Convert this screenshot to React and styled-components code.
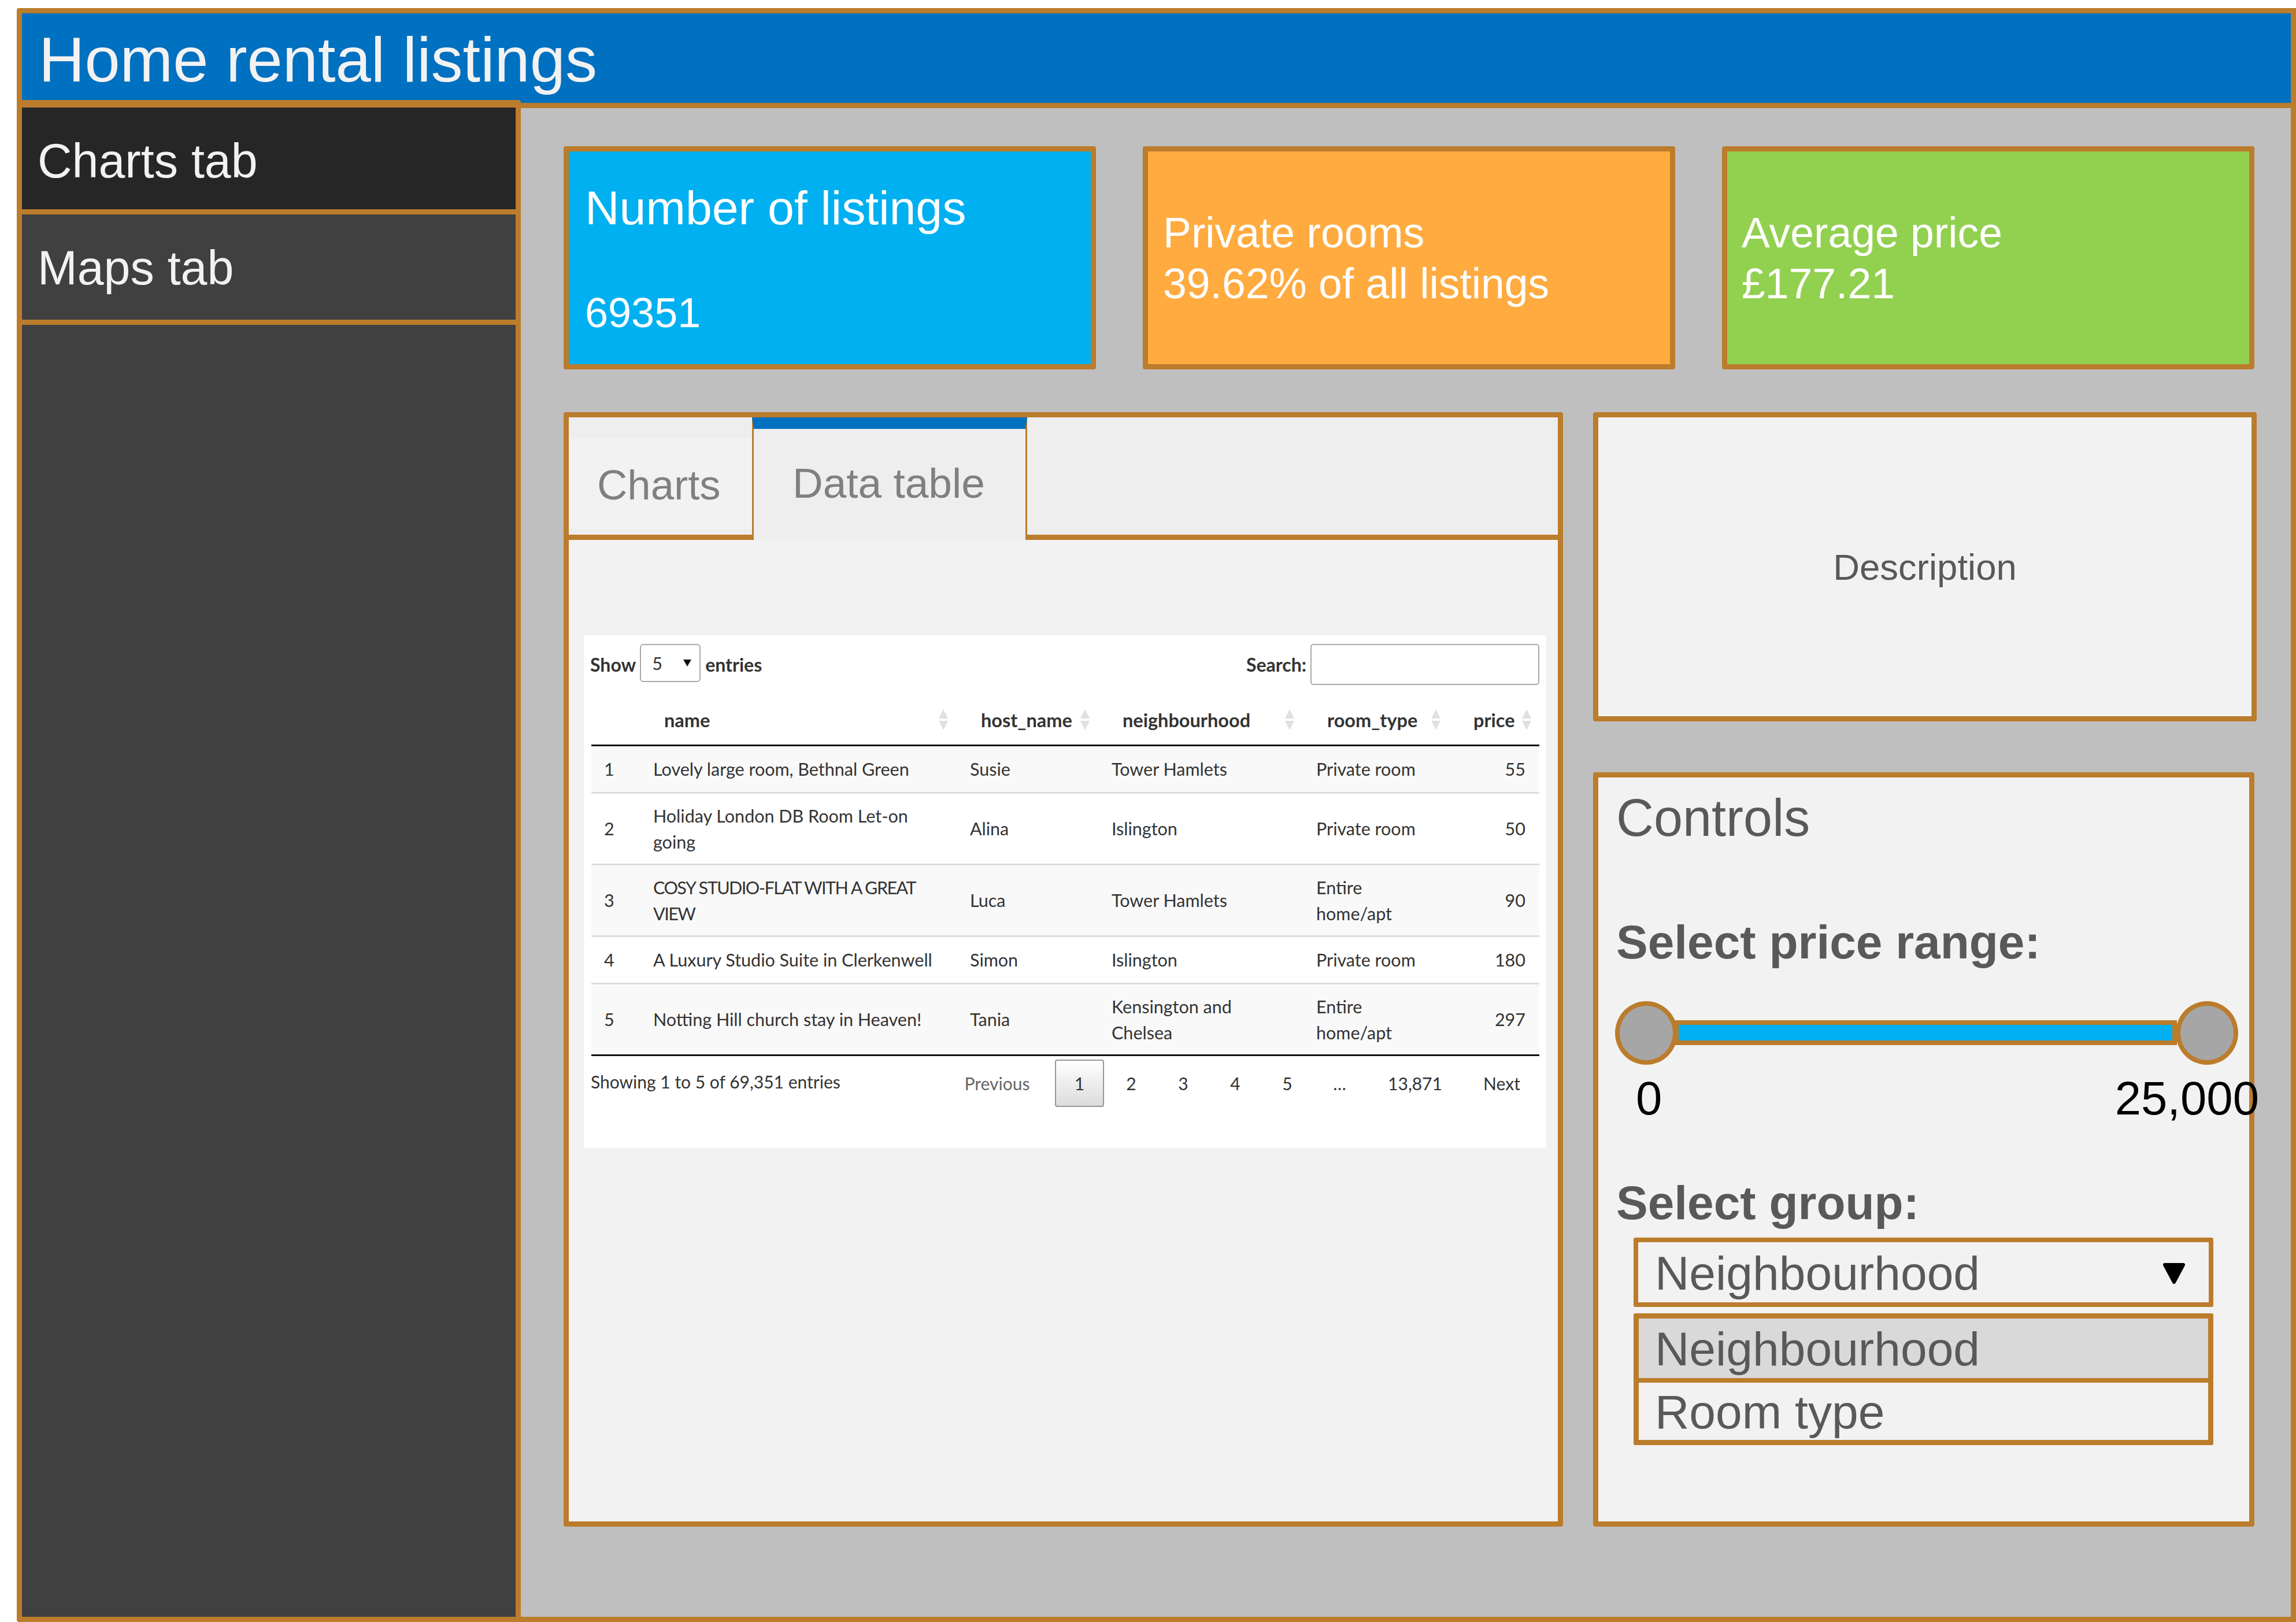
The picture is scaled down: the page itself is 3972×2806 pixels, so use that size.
import styled, { createGlobalStyle } from 'styled-components'

const GlobalStyle = createGlobalStyle`
  html, body { margin: 0; padding: 0; background: #fff; }
  * { box-sizing: border-box; }
`

const edge = '#bb7c2c'

const Page = styled.div`
  width: 3972px;
  height: 2806px;
  padding: 14px 0 0 29px;
  display: flex;
  flex-direction: column;
  font-family: "Liberation Sans", Arial, sans-serif;
`
const Header = styled.header`
  height: 173px;
  flex: none;
  background: #0070c0;
  border: 9px solid ${edge};
  border-radius: 4px 0 0 0;
  padding: 4px 0 0 29px;
  display: flex;
  align-items: center;
`
const Title = styled.h1`
  margin: 0;
  font-size: 110px;
  font-weight: 400;
  color: #f2f2f2;
`
const Body = styled.div`
  flex: 1;
  display: flex;
  min-height: 0;
`
const Sidebar = styled.nav`
  width: 872px;
  flex: none;
  margin-top: -14px;
  z-index: 1;
  background: #404040;
  border-top: 13px solid ${edge};
  border-left: 9px solid ${edge};
  border-right: 9px solid ${edge};
  border-bottom: 9px solid ${edge};
  border-radius: 4px 4px 0 4px;
`
const SideItem = styled.div`
  height: ${p => p.$h}px;
  box-sizing: content-box;
  background: ${p => p.$active ? '#262626' : '#404040'};
  border-bottom: 9px solid ${edge};
  padding-left: 27px;
  padding-top: ${p => p.$active ? 8 : 3}px;
  display: flex;
  align-items: center;
  font-size: 82.5px;
  color: #f2f2f2;
`
const Main = styled.main`
  flex: 1;
  background: #bfbfbf;
  border-right: 9px solid ${edge};
  border-bottom: 9px solid ${edge};
  padding: 66px 63px 0 74px;
  display: flex;
  flex-direction: column;
  gap: 74px;
`
const Cards = styled.div`
  display: grid;
  grid-template-columns: repeat(3, 1fr);
  column-gap: 81px;
`
const Card = styled.div`
  height: 386px;
  background: ${p => p.$bg};
  border: 9px solid ${edge};
  border-radius: 4px;
  color: #fff;
  padding: 2px 0 0 ${p => p.$pad}px;
  display: flex;
  flex-direction: column;
  justify-content: center;
  font-size: 73.3px;
  line-height: 88px;
`
const BigCardTitle = styled.div`
  font-size: 82.4px;
  line-height: 90px;
  margin-bottom: 97px;
`
const BigCardValue = styled.div`
  font-size: 72px;
  line-height: 80px;
`
const Lower = styled.div`
  display: grid;
  grid-template-columns: 1729px 1144px;
  column-gap: 52px;
  height: 1928px;
`
const TabBox = styled.section`
  background: #f2f2f2;
  border: 9px solid ${edge};
  border-radius: 4px;
  display: flex;
  flex-direction: column;
`
const TabBar = styled.div`
  height: 212px;
  flex: none;
  background: #eeeeee;
  border-bottom: 9px solid ${edge};
  display: flex;
`
const Tab = styled.div`
  width: 317px;
  height: 158px;
  margin-top: 35px;
  background: #f2f2f2;
  padding: 4px 0 0 49px;
  display: flex;
  align-items: center;
  font-size: 72.5px;
  color: #808080;
`
const ActiveTab = styled.div`
  width: 476px;
  height: 212px;
  flex: none;
  background: #eeeeee;
  border-left: 3px solid ${edge};
  border-right: 3px solid ${edge};
  border-top: 20px solid #0070c0;
  padding: 0 0 0 67px;
  font-size: 73px;
  line-height: 187px;
  color: #808080;
`
const TabBody = styled.div`
  flex: 1;
  padding: 165px 20px 0 26px;
`
const TableCard = styled.div`
  height: 887px;
  background: #fff;
  padding: 15px 12px 0 13px;
  font-family: Lato, "Liberation Sans", sans-serif;
  font-size: 30.5px;
  color: #333;
`
const Toolbar = styled.div`
  height: 71px;
  margin-left: -2px;
  display: flex;
  align-items: center;
  font-size: 32px;
  font-weight: 700;
`
const PageSelect = styled.div`
  width: 105px;
  height: 66px;
  margin: 0 8px 5px 7px;
  border: 2px solid #aaa;
  border-radius: 6px;
  padding: 0 14px 0 19px;
  display: flex;
  align-items: center;
  justify-content: space-between;
  font-size: 30.5px;
  font-weight: 400;
`
const SearchLabel = styled.span`
  margin-left: auto;
  margin-right: 7px;
`
const SearchBox = styled.div`
  width: 396px;
  height: 71px;
  border: 2px solid #aaa;
  border-radius: 5px;
  background: #fff;
`
const Table = styled.table`
  width: 1640px;
  margin-top: 18px;
  border-collapse: collapse;
  table-layout: fixed;
`
const Th = styled.th`
  height: 86px;
  padding: 0 13px 0 ${p => p.$pad ?? 43}px;
  border-bottom: 3px solid #111;
  text-align: left;
  font-size: 32.5px;
  font-weight: 700;
`
const ThInner = styled.div`
  display: flex;
  align-items: center;
  justify-content: space-between;
  white-space: nowrap;
`
const Tr = styled.tr`
  background: ${p => p.$odd ? '#f9f9f9' : '#fff'};
  &:not(:last-child) td { border-bottom: 3px solid #ddd; }
  &:last-child td { border-bottom: 3px solid #111; }
`
const Td = styled.td`
  height: 82px;
  padding: 16px 24px 15px;
  line-height: 45px;
  vertical-align: middle;
  text-align: ${p => p.$right ? 'right' : 'left'};
  &:first-child { padding-left: 22px; }
`
const Caps = styled.span`
  letter-spacing: -1.5px;
`
const Footer = styled.div`
  display: flex;
  align-items: flex-start;
  margin-top: 6px;
  font-size: 30px;
`
const Info = styled.div`
  line-height: 76px;
  margin-left: -1px;
`
const Pager = styled.div`
  margin-left: auto;
  display: flex;
`
const PageItem = styled.div`
  width: ${p => p.$w}px;
  height: 82px;
  padding-right: ${p => p.$dim ? 12 : 0}px;
  display: flex;
  align-items: center;
  justify-content: center;
  color: ${p => p.$dim ? '#666' : '#333'};
`
const ActivePage = styled(PageItem)`
  margin: 0 2px 0 3px;
  border: 2px solid #979797;
  border-radius: 4px;
  background: linear-gradient(to bottom, #fff, #dcdcdc);
`
const SideColumn = styled.div`
  display: flex;
  flex-direction: column;
  gap: 88px;
`
const Description = styled.section`
  height: 535px;
  flex: none;
  margin-right: -4px;
  background: #f2f2f2;
  border: 9px solid ${edge};
  border-radius: 4px;
  display: flex;
  align-items: center;
  justify-content: center;
  font-size: 63.5px;
  color: #595959;
`
const Controls = styled.section`
  flex: 1;
  background: #f2f2f2;
  border: 9px solid ${edge};
  border-radius: 4px;
  padding: 20px 0 0 31px;
  color: #595959;
`
const ControlsTitle = styled.h2`
  margin: 0;
  font-size: 90px;
  line-height: 100px;
  font-weight: 400;
`
const FieldLabel = styled.div`
  font-size: 82px;
  line-height: 90px;
  font-weight: 700;
  margin-top: ${p => p.$top}px;
`
const Slider = styled.div`
  position: relative;
  width: 1078px;
  height: 110px;
  margin: 57px 0 0 -2px;
  padding: 33px 106px 0 102px;
`
const Track = styled.div`
  height: 43px;
  background: #00b0f0;
  border: 8px solid ${edge};
`
const Handle = styled.div`
  position: absolute;
  top: 0;
  ${p => p.$side}: 0;
  width: 108px;
  height: 110px;
  border-radius: 50%;
  background: #a6a6a6;
  border: 8px solid ${edge};
`
const SliderLabels = styled.div`
  width: 1078px;
  margin: 13px 0 0 -2px;
  padding-left: 36px;
  display: flex;
  justify-content: space-between;
  font-size: 81.5px;
  line-height: 90px;
  color: #000;
`
const OverLabel = styled.span`
  margin-right: -36px;
`
const SelectBox = styled.div`
  width: 1003px;
  height: 120px;
  margin: 15px 0 11px 30px;
  border: 8px solid ${edge};
  border-radius: 3px;
  padding: 3px 40px 0 29px;
  display: flex;
  align-items: center;
  justify-content: space-between;
  font-size: 82.2px;
`
const Options = styled.div`
  width: 1003px;
  margin-left: 30px;
  border: 9px solid ${edge};
  border-radius: 3px;
  font-size: 82.2px;
`
const Option = styled.div`
  height: ${p => p.$h}px;
  line-height: ${p => p.$h + 2}px;
  padding-left: 28px;
  background: ${p => p.$sel ? '#d9d9d9' : 'transparent'};
  & + & { border-top: 8px solid ${edge}; box-sizing: content-box; }
`

function SortIcon() {
  return (
    <svg width="18" height="36" viewBox="0 0 18 36">
      <path d="M9 0 L17 16 H1 Z" fill="#e0e0e0" />
      <path d="M9 36 L17 20 H1 Z" fill="#e0e0e0" />
    </svg>
  )
}

let rows = [
  ['1', 'Lovely large room, Bethnal Green', 'Susie', 'Tower Hamlets', 'Private room', 55],
  ['2', 'Holiday London DB Room Let-on going', 'Alina', 'Islington', 'Private room', 50],
  ['3', <Caps>COSY STUDIO-FLAT WITH A GREAT VIEW</Caps>, 'Luca', 'Tower Hamlets', 'Entire home/apt', 90],
  ['4', 'A Luxury Studio Suite in Clerkenwell', 'Simon', 'Islington', 'Private room', 180],
  ['5', 'Notting Hill church stay in Heaven!', 'Tania', 'Kensington and Chelsea', 'Entire home/apt', 297],
]
let widths = [83, 548, 245, 354, 253, 157]
let heads = ['name', 'host_name', 'neighbourhood', 'room_type', 'price']

export default function App() {
  return (
    <Page>
      <GlobalStyle />
      <Header><Title>Home rental listings</Title></Header>
      <Body>
        <Sidebar>
          <SideItem $active $h={168}>Charts tab</SideItem>
          <SideItem $h={179}>Maps tab</SideItem>
        </Sidebar>
        <Main>
          <Cards>
            <Card $bg="#00b0f0" $pad={28}>
              <BigCardTitle>Number of listings</BigCardTitle>
              <BigCardValue>69351</BigCardValue>
            </Card>
            <Card $bg="#ffab40" $pad={26}>
              <div>Private rooms</div>
              <div>39.62% of all listings</div>
            </Card>
            <Card $bg="#92d050" $pad={25}>
              <div>Average price</div>
              <div>£177.21</div>
            </Card>
          </Cards>
          <Lower>
            <TabBox>
              <TabBar>
                <Tab>Charts</Tab>
                <ActiveTab>Data table</ActiveTab>
              </TabBar>
              <TabBody>
                <TableCard>
                  <Toolbar>
                    Show
                    <PageSelect>
                      5
                      <svg width="14" height="12" viewBox="0 0 14 12"><path d="M0 0 H14 L7 12 Z" fill="#111" /></svg>
                    </PageSelect>
                    entries
                    <SearchLabel>Search:</SearchLabel>
                    <SearchBox />
                  </Toolbar>
                  <Table>
                    <colgroup>
                      {widths.map((w, i) => <col key={i} width={w} />)}
                    </colgroup>
                    <thead>
                      <tr>
                        <Th $pad={0} />
                        {heads.map(h => (
                          <Th key={h}><ThInner>{h}<SortIcon /></ThInner></Th>
                        ))}
                      </tr>
                    </thead>
                    <tbody>
                      {rows.map((r, i) => (
                        <Tr key={r[0]} $odd={i % 2 == 0}>
                          {r.map((c, j) => <Td key={j} $right={j == 5}>{c}</Td>)}
                        </Tr>
                      ))}
                    </tbody>
                  </Table>
                  <Footer>
                    <Info>Showing 1 to 5 of 69,351 entries</Info>
                    <Pager>
                      <PageItem $w={182} $dim>Previous</PageItem>
                      <ActivePage $w={85}>1</ActivePage>
                      <PageItem $w={90}>2</PageItem>
                      <PageItem $w={90}>3</PageItem>
                      <PageItem $w={90}>4</PageItem>
                      <PageItem $w={90}>5</PageItem>
                      <PageItem $w={91}>…</PageItem>
                      <PageItem $w={170}>13,871</PageItem>
                      <PageItem $w={130}>Next</PageItem>
                    </Pager>
                  </Footer>
                </TableCard>
              </TabBody>
            </TabBox>
            <SideColumn>
              <Description>Description</Description>
              <Controls>
                <ControlsTitle>Controls</ControlsTitle>
                <FieldLabel $top={120}>Select price range:</FieldLabel>
                <Slider>
                  <Track />
                  <Handle $side="left" />
                  <Handle $side="right" />
                </Slider>
                <SliderLabels>
                  <span>0</span>
                  <OverLabel>25,000</OverLabel>
                </SliderLabels>
                <FieldLabel $top={91}>Select group:</FieldLabel>
                <SelectBox>
                  Neighbourhood
                  <svg width="40" height="38" viewBox="0 0 40 38">
                    <path d="M4 4 H36 L20 34 Z" fill="#000" stroke="#000" strokeWidth="6" strokeLinejoin="round" />
                  </svg>
                </SelectBox>
                <Options>
                  <Option $sel $h={103}>Neighbourhood</Option>
                  <Option $h={99}>Room type</Option>
                </Options>
              </Controls>
            </SideColumn>
          </Lower>
        </Main>
      </Body>
    </Page>
  )
}
